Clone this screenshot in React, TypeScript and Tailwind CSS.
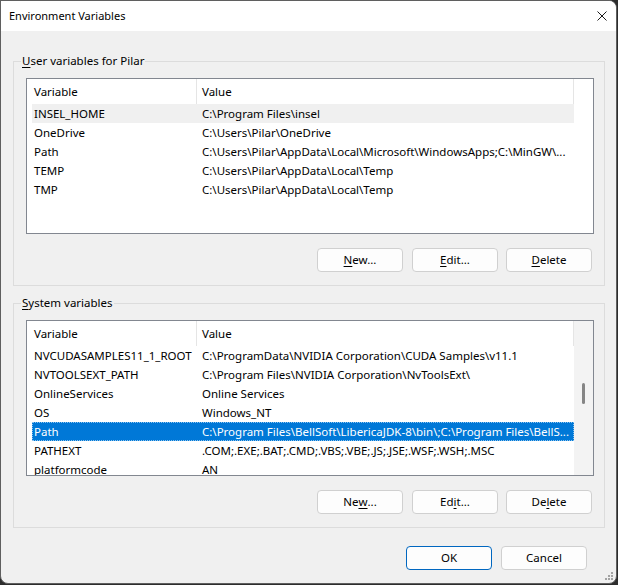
import type { ReactNode } from "react"

type Row = { name: string; value: string; hover?: boolean; selected?: boolean }

const userVars: Row[] = [
  { name: "INSEL_HOME", value: "C:\\Program Files\\insel", hover: true },
  { name: "OneDrive", value: "C:\\Users\\Pilar\\OneDrive" },
  { name: "Path", value: "C:\\Users\\Pilar\\AppData\\Local\\Microsoft\\WindowsApps;C:\\MinGW\\..." },
  { name: "TEMP", value: "C:\\Users\\Pilar\\AppData\\Local\\Temp" },
  { name: "TMP", value: "C:\\Users\\Pilar\\AppData\\Local\\Temp" },
]

const systemVars: Row[] = [
  { name: "NVCUDASAMPLES11_1_ROOT", value: "C:\\ProgramData\\NVIDIA Corporation\\CUDA Samples\\v11.1" },
  { name: "NVTOOLSEXT_PATH", value: "C:\\Program Files\\NVIDIA Corporation\\NvToolsExt\\" },
  { name: "OnlineServices", value: "Online Services" },
  { name: "OS", value: "Windows_NT" },
  { name: "Path", value: "C:\\Program Files\\BellSoft\\LibericaJDK-8\\bin\\;C:\\Program Files\\BellS...", selected: true },
  { name: "PATHEXT", value: ".COM;.EXE;.BAT;.CMD;.VBS;.VBE;.JS;.JSE;.WSF;.WSH;.MSC" },
  { name: "platformcode", value: "AN" },
]

function Button({ children, primary }: { children: ReactNode; primary?: boolean }) {
  return (
    <button
      className={
        primary
          ? "w-[86px] h-[24px] rounded-[4px] border border-[#0067c0] bg-[#fdfdfd] text-black flex items-center justify-center"
          : "w-[86px] h-[24px] rounded-[4px] border border-[#d0d0d0] bg-[#fdfdfd] text-black flex items-center justify-center"
      }
    >
      {children}
    </button>
  )
}

function VarList({ rows, scrollbar }: { rows: Row[]; scrollbar?: boolean }) {
  return (
    <div className="w-[568px] h-[156px] border border-[#828790] bg-white flex overflow-hidden">
      <div className="w-[547px] flex flex-col">
        {/* header */}
        <div className="h-[25px] flex shrink-0">
          <div className="w-[170px] pl-[7px] flex items-center border-r border-[#e5e5e5]">Variable</div>
          <div className="flex-1 pl-[5px] flex items-center border-r border-[#e5e5e5]">Value</div>
        </div>
        {rows.map((r) => (
          <div
            key={r.name + r.value}
            className={
              r.selected
                ? "ml-[5px] w-[542px] h-[19px] shrink-0 flex items-center bg-[#0078d7] text-white outline-1 outline-dotted -outline-offset-1 outline-[#8cc3ee]"
                : r.hover
                  ? "ml-[5px] w-[542px] h-[19px] shrink-0 flex items-center bg-[#f0f0f0]"
                  : "ml-[5px] w-[542px] h-[19px] shrink-0 flex items-center"
            }
          >
            <div className="w-[168px] pl-[2px] whitespace-nowrap overflow-hidden">{r.name}</div>
            <div className="flex-1 pl-[2px] whitespace-nowrap overflow-hidden">{r.value}</div>
          </div>
        ))}
      </div>
      {scrollbar ? (
        <div className="w-[19px] bg-[#f3f3f3] pt-[62px] pl-[8px]">
          <div className="w-[3px] h-[21px] rounded-full bg-[#858585]" />
        </div>
      ) : (
        <div className="w-[19px]" />
      )}
    </div>
  )
}

function GroupBox({ label, children }: { label: ReactNode; children: ReactNode }) {
  return (
    <div className="relative w-[592px] border border-[#dcdcdc] pt-[16px] pl-[12px] pr-[10px] pb-[13px]">
      <span className="absolute left-[7px] -top-[9px] px-[1px] leading-[16px] bg-[#f0f0f0]">{label}</span>
      {children}
    </div>
  )
}

export default function App() {
  return (
    <div
      className="w-[618px] h-[585px] bg-[#2d2d2d] text-[11.5px] text-black leading-[16px]"
      style={{ fontFamily: '"Noto Sans", "Segoe UI", sans-serif' }}
    >
      <div className="relative w-[617px] h-[584px] bg-[#f0f0f0] border border-[#5f5f5f] rounded-tr-[8px] rounded-b-[8px] overflow-hidden flex flex-col">
        {/* title bar */}
        <div className="h-[30px] bg-white flex items-center justify-between pl-[8px] pr-[9px] shrink-0">
          <span className="text-[11px]">Environment Variables</span>
          <svg width="10" height="10" viewBox="0 0 10 10" fill="none" stroke="#1a1a1a" strokeWidth="1">
            <path d="M0.5 0.5 L9.5 9.5 M9.5 0.5 L0.5 9.5" />
          </svg>
        </div>

        <div className="px-[12px] flex flex-col">
          <div className="mt-[30px]">
            <GroupBox
              label={
                <>
                  <u className="underline-offset-2">U</u>ser variables for Pilar
                </>
              }
            >
              <VarList rows={userVars} />
              <div className="mt-[14px] pr-[2px] flex justify-end gap-[8px]">
                <div className="mr-[1px]">
                  <Button>
                    <u className="underline-offset-2">N</u>ew...
                  </Button>
                </div>
                <Button>
                  <u className="underline-offset-2">E</u>dit...
                </Button>
                <Button>
                  <u className="underline-offset-2">D</u>elete
                </Button>
              </div>
            </GroupBox>
          </div>

          <div className="mt-[17px]">
            <GroupBox
              label={
                <>
                  <u className="underline-offset-2">S</u>ystem variables
                </>
              }
            >
              <VarList rows={systemVars} scrollbar />
              <div className="mt-[14px] pr-[2px] flex justify-end gap-[8px]">
                <div className="mr-[1px]">
                  <Button>
                    Ne<u className="underline-offset-2">w</u>...
                  </Button>
                </div>
                <Button>
                  Ed<u className="underline-offset-2">i</u>t...
                </Button>
                <Button>
                  De<u className="underline-offset-2">l</u>ete
                </Button>
              </div>
            </GroupBox>
          </div>

          <div className="mt-[18px] pr-[17px] flex justify-end gap-[9px]">
            <Button primary>OK</Button>
            <Button>Cancel</Button>
          </div>
        </div>

        {/* resize grip */}
        <svg className="absolute right-[2px] bottom-[2px]" width="9" height="9" viewBox="0 0 9 9" fill="#a3a3a3">
          <rect x="6" y="0" width="2" height="2" />
          <rect x="3" y="3" width="2" height="2" />
          <rect x="6" y="3" width="2" height="2" />
          <rect x="0" y="6" width="2" height="2" />
          <rect x="3" y="6" width="2" height="2" />
          <rect x="6" y="6" width="2" height="2" />
        </svg>
      </div>
    </div>
  )
}
